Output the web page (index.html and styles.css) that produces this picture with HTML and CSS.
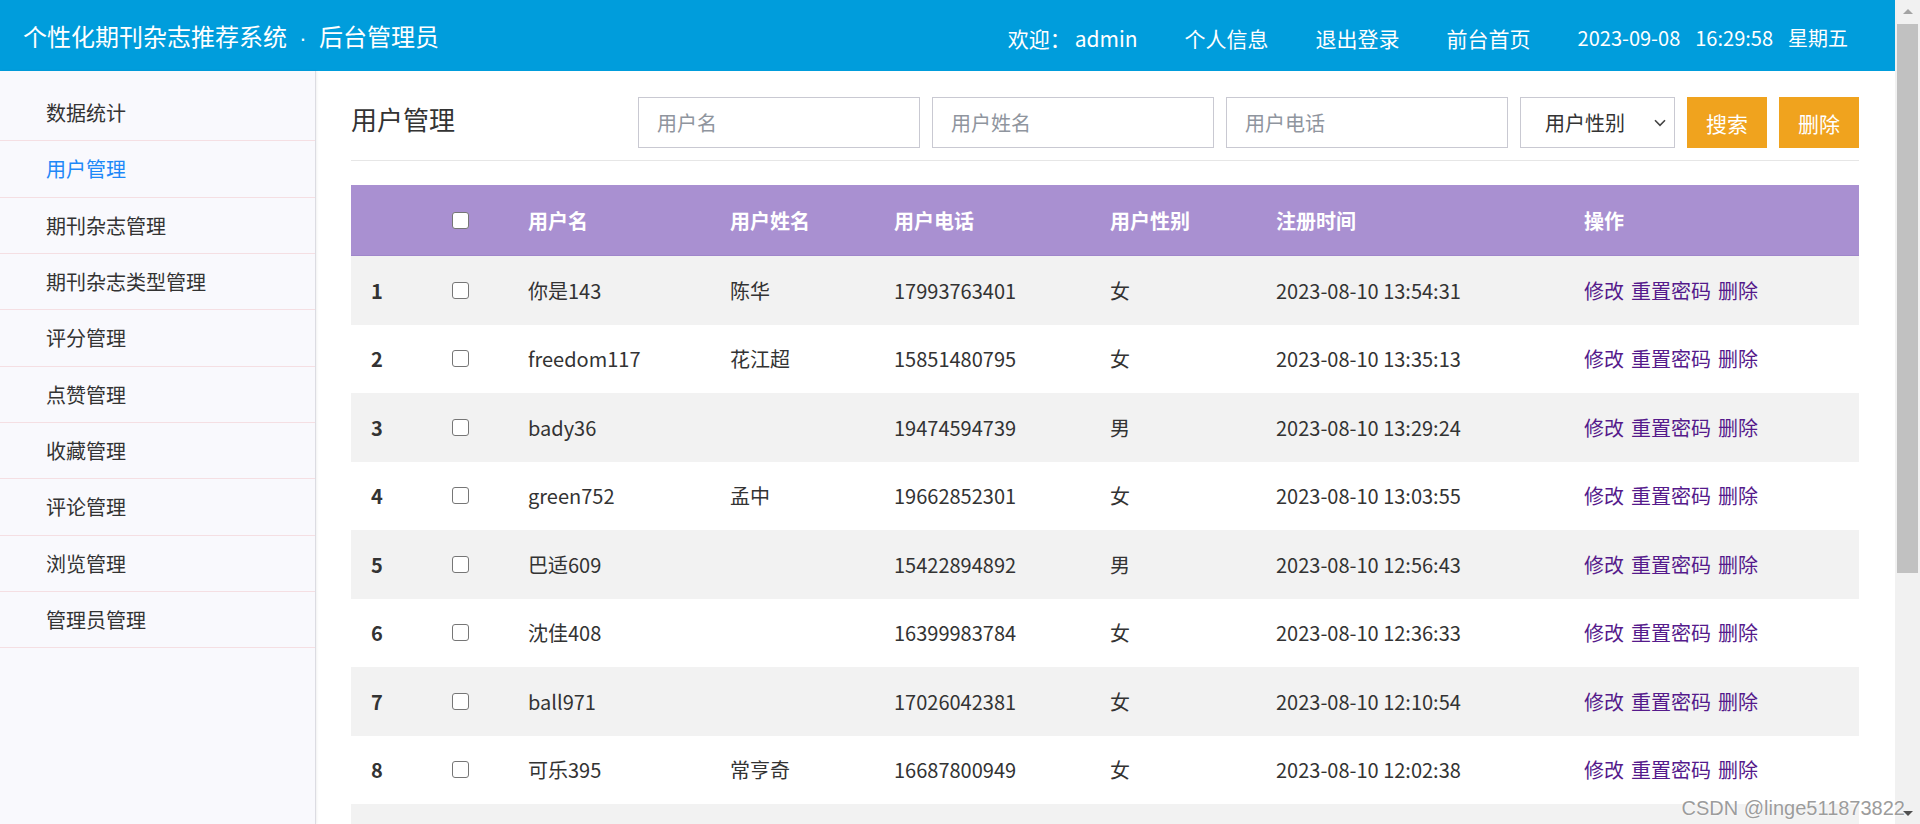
FILE: index.html
```html
<!DOCTYPE html>
<html lang="zh-CN">
<head>
<meta charset="utf-8">
<title>用户管理 - 个性化期刊杂志推荐系统</title>
<link rel="stylesheet" href="styles.css">
</head>
<body>
<div class="viewport">
  <div class="page">
    <header class="topbar">
      <div class="brand">个性化期刊杂志推荐系统<span class="dot">·</span>后台管理员</div>
      <nav class="topnav">
        <span class="welcome">欢迎：<span class="user">admin</span></span>
        <a href="#">个人信息</a>
        <a href="#">退出登录</a>
        <a href="#">前台首页</a>
        <span class="clock"><span>2023-09-08</span><span>16:29:58</span><span>星期五</span></span>
      </nav>
    </header>
    <div class="layout">
      <aside class="sidebar">
        <ul class="menu">
          <li><a href="#">数据统计</a></li>
          <li><a href="#" class="active">用户管理</a></li>
          <li><a href="#">期刊杂志管理</a></li>
          <li><a href="#">期刊杂志类型管理</a></li>
          <li><a href="#">评分管理</a></li>
          <li><a href="#">点赞管理</a></li>
          <li><a href="#">收藏管理</a></li>
          <li><a href="#">评论管理</a></li>
          <li><a href="#">浏览管理</a></li>
          <li><a href="#">管理员管理</a></li>
        </ul>
      </aside>
      <main class="content">
        <div class="toolbar">
          <h2 class="page-title">用户管理</h2>
          <form class="filters">
            <input class="field" type="text" placeholder="用户名">
            <input class="field" type="text" placeholder="用户姓名">
            <input class="field" type="text" placeholder="用户电话">
            <div class="select-wrap">
              <select class="field select"><option>用户性别</option><option>男</option><option>女</option></select>
              <svg class="chev" width="12" height="8" viewBox="0 0 12 8"><path d="M1 1.2 L6 6.4 L11 1.2" fill="none" stroke="#444" stroke-width="1.6"/></svg>
            </div>
            <button type="button" class="btn">搜索</button>
            <button type="button" class="btn">删除</button>
          </form>
        </div>
        <table class="grid">
          <colgroup>
            <col style="width:81px"><col style="width:76px"><col style="width:202px"><col style="width:164px"><col style="width:216px"><col style="width:166px"><col style="width:308px"><col style="width:295px">
          </colgroup>
          <thead>
            <tr><th></th><th><input type="checkbox" class="chk"></th><th>用户名</th><th>用户姓名</th><th>用户电话</th><th>用户性别</th><th>注册时间</th><th>操作</th></tr>
          </thead>
          <tbody>
            <tr><td class="num">1</td><td><input type="checkbox" class="chk"></td><td>你是143</td><td>陈华</td><td>17993763401</td><td>女</td><td>2023-08-10 13:54:31</td><td class="ops"><a href="#">修改</a><a href="#">重置密码</a><a href="#">删除</a></td></tr>
            <tr><td class="num">2</td><td><input type="checkbox" class="chk"></td><td>freedom117</td><td>花江超</td><td>15851480795</td><td>女</td><td>2023-08-10 13:35:13</td><td class="ops"><a href="#">修改</a><a href="#">重置密码</a><a href="#">删除</a></td></tr>
            <tr><td class="num">3</td><td><input type="checkbox" class="chk"></td><td>bady36</td><td></td><td>19474594739</td><td>男</td><td>2023-08-10 13:29:24</td><td class="ops"><a href="#">修改</a><a href="#">重置密码</a><a href="#">删除</a></td></tr>
            <tr><td class="num">4</td><td><input type="checkbox" class="chk"></td><td>green752</td><td>孟中</td><td>19662852301</td><td>女</td><td>2023-08-10 13:03:55</td><td class="ops"><a href="#">修改</a><a href="#">重置密码</a><a href="#">删除</a></td></tr>
            <tr><td class="num">5</td><td><input type="checkbox" class="chk"></td><td>巴适609</td><td></td><td>15422894892</td><td>男</td><td>2023-08-10 12:56:43</td><td class="ops"><a href="#">修改</a><a href="#">重置密码</a><a href="#">删除</a></td></tr>
            <tr><td class="num">6</td><td><input type="checkbox" class="chk"></td><td>沈佳408</td><td></td><td>16399983784</td><td>女</td><td>2023-08-10 12:36:33</td><td class="ops"><a href="#">修改</a><a href="#">重置密码</a><a href="#">删除</a></td></tr>
            <tr><td class="num">7</td><td><input type="checkbox" class="chk"></td><td>ball971</td><td></td><td>17026042381</td><td>女</td><td>2023-08-10 12:10:54</td><td class="ops"><a href="#">修改</a><a href="#">重置密码</a><a href="#">删除</a></td></tr>
            <tr><td class="num">8</td><td><input type="checkbox" class="chk"></td><td>可乐395</td><td>常亨奇</td><td>16687800949</td><td>女</td><td>2023-08-10 12:02:38</td><td class="ops"><a href="#">修改</a><a href="#">重置密码</a><a href="#">删除</a></td></tr>
            <tr class="tail"><td></td><td></td><td></td><td></td><td></td><td></td><td></td><td></td></tr>
          </tbody>
        </table>
      </main>
    </div>
  </div>
  <div class="vscroll">
    <div class="arrow up"></div>
    <div class="thumb"></div>
    <div class="track-rest"></div>
    <div class="arrow down"></div>
  </div>
  <div class="watermark">CSDN @linge511873822</div>
</div>
</body>
</html>
```

FILE: styles.css
```css
html, body {
  margin: 0;
  padding: 0;
  height: 824px;
  overflow: hidden;
}
body {
  font-family: "Noto Sans CJK SC", "Noto Sans", sans-serif;
  color: #333;
  background: #fff;
}
a { text-decoration: none; color: inherit; }

.viewport {
  position: relative;
  display: flex;
  height: 824px;
  overflow: hidden;
}
.page {
  flex: 1;
  min-width: 0;
  display: flex;
  flex-direction: column;
}

/* top bar */
.topbar {
  flex: none;
  box-sizing: border-box;
  height: 71px;
  padding: 4px 47px 0 23px;
  background: #009ddc;
  color: #fff;
  display: flex;
  align-items: center;
  justify-content: space-between;
}
.brand {
  font-size: 24px;
  line-height: 30px;
  white-space: nowrap;
}
.brand .dot {
  display: inline-block;
  width: 32px;
  text-align: center;
  font-family: "Liberation Sans", Arial, sans-serif;
  font-size: 22px;
}
.topnav {
  display: flex;
  align-items: center;
  gap: 47px;
  font-size: 21px;
  line-height: 28px;
  white-space: nowrap;
}
.topnav a { color: #fff; }
.user { margin-left: 4px; }
.clock { font-size: 20px; }
.clock span + span { margin-left: 15px; }

/* layout */
.layout {
  flex: 1;
  min-height: 0;
  display: flex;
}
.sidebar {
  flex: none;
  width: 315px;
  background: #f9f9fd;
  border-right: 1px solid #dcdce2;
  box-shadow: 1px 0 2px rgba(0, 0, 0, 0.06);
  padding-top: 14px;
}
.menu {
  list-style: none;
  margin: 0;
  padding: 0;
}
.menu li {
  border-bottom: 1px solid #f5dfe3;
}
.menu a {
  display: block;
  height: 55.35px;
  line-height: 55px;
  padding-left: 46px;
  font-size: 20px;
  color: #333;
}
.menu a.active { color: #1e88f8; }

/* content */
.content {
  flex: 1;
  min-width: 0;
  padding: 26px 0 0 35px;
}
.toolbar {
  width: 1508px;
  display: flex;
  justify-content: space-between;
  align-items: flex-start;
  padding-bottom: 12px;
  border-bottom: 1px solid #e6e6e6;
}
.page-title {
  margin: 0;
  font-size: 26px;
  font-weight: normal;
  line-height: 44px;
  color: #333;
}
.filters {
  display: flex;
  gap: 12px;
  margin: 0;
}
.field {
  box-sizing: border-box;
  width: 282px;
  height: 51px;
  margin: 0;
  border: 1px solid #c9c9d2;
  border-radius: 0;
  padding: 0 18px;
  font-family: "Noto Sans CJK SC", sans-serif;
  font-size: 20px;
  color: #333;
  background: #fff;
  outline: none;
}
.field::placeholder { color: #8f959e; }
.select-wrap {
  position: relative;
  width: 155px;
}
.select {
  width: 155px;
  padding-left: 24px;
  -webkit-appearance: none;
  appearance: none;
}
.chev {
  position: absolute;
  right: 9px;
  top: 22px;
  pointer-events: none;
}
.btn {
  width: 80px;
  height: 51px;
  margin: 0;
  border: 0;
  padding: 0;
  background: #f0a31e;
  color: #fff;
  font-family: "Noto Sans CJK SC", sans-serif;
  font-size: 21px;
}

/* table */
.grid {
  margin-top: 24px;
  width: 1508px;
  border-collapse: collapse;
  table-layout: fixed;
  font-size: 20px;
  color: #333;
}
.grid th {
  height: 70px;
  padding: 0 0 0 20px;
  background: #a990d1;
  color: #fff;
  font-weight: bold;
  text-align: left;
  border-bottom: 1px solid #9f86ca;
}
.grid td {
  height: 68.5px;
  padding: 0 0 0 20px;
  text-align: left;
  white-space: nowrap;
}
.grid tbody tr:nth-child(odd) { background: #f2f2f2; }
.grid .num { font-weight: bold; }
.chk {
  -webkit-appearance: none;
  appearance: none;
  box-sizing: border-box;
  width: 17px;
  height: 17px;
  margin: 0;
  border: 1px solid #767676;
  border-radius: 3px;
  background: #fff;
  vertical-align: middle;
  position: relative;
  top: -3px;
}
.ops a {
  color: #551a8b;
  margin-right: 7px;
}

/* fake scrollbar */
.vscroll {
  flex: none;
  width: 25px;
  background: #f1f1f1;
  display: flex;
  flex-direction: column;
  align-items: center;
}
.arrow {
  flex: none;
  height: 22px;
  width: 100%;
  display: flex;
  align-items: center;
  justify-content: center;
}
.arrow::before {
  content: "";
  width: 0;
  height: 0;
  border-left: 5px solid transparent;
  border-right: 5px solid transparent;
}
.arrow.up::before { border-bottom: 5px solid #a3a3a3; }
.arrow.down::before { border-top: 5px solid #505050; }
.thumb {
  flex: none;
  width: 21px;
  height: 549px;
  margin-top: 2px;
  background: #c1c1c1;
}
.track-rest { flex: 1; }

.watermark {
  position: absolute;
  right: 15px;
  bottom: 6px;
  font-family: "Liberation Sans", Arial, sans-serif;
  font-size: 20px;
  line-height: 20px;
  color: #9c9c9c;
  text-shadow: 0 0 2px #fff, 0 0 1px #fff;
  white-space: nowrap;
}
```
